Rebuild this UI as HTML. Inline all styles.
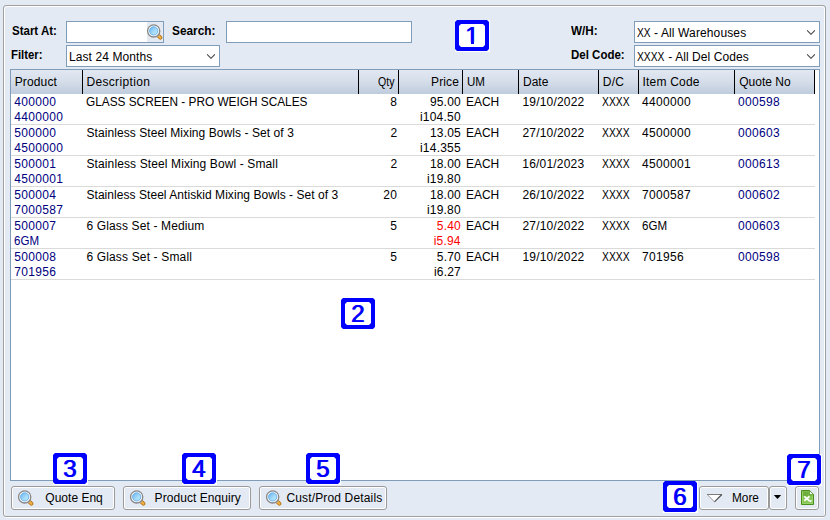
<!DOCTYPE html>
<html lang="en">
<head>
<meta charset="utf-8">
<title>Product Quote History</title>
<style>
html,body{margin:0;padding:0;}
body{width:830px;height:520px;background:#e4eaf3;position:relative;overflow:hidden;
  font-family:"Liberation Sans",sans-serif;font-size:12px;color:#000;line-height:15px;}
#panelw{position:absolute;left:4px;top:6px;width:819px;height:510px;border:1px solid #fff;border-radius:3px;}
#panel{position:absolute;left:3px;top:5px;width:821px;height:510px;border:1px solid #a0a0a0;border-radius:3px;}
.t{position:absolute;white-space:nowrap;height:15px;line-height:15px;}
.b{font-weight:bold;}
.nv{color:#000080;}
.rd{color:#ff0000;}
.inp{position:absolute;box-sizing:border-box;background:#fff;border:1px solid #7f9db9;height:22px;}
.inp .ico{position:absolute;left:80px;top:0;width:16px;height:20px;background:#e4e9f2;}
.sel{position:absolute;box-sizing:border-box;background:#fff;border:1px solid #7f9db9;height:22px;}
.sel svg{position:absolute;right:4px;top:8px;}
#grid{position:absolute;left:10px;top:69px;width:810px;height:412px;box-sizing:border-box;border:1px solid #7f9db9;background:#fff;}
#hdr{position:absolute;left:0;top:0;width:803px;height:24px;background:linear-gradient(#e2e8f2 0%,#d4dde9 50%,#bfccdd 100%);}
#hdr i{position:absolute;top:0;width:1px;height:24px;background:#000;}
.row{position:absolute;left:0;width:804px;height:30px;border-bottom:1px solid #dadada;}
.btn{position:absolute;box-sizing:border-box;top:486px;height:24px;border:1px solid #9a9a9a;border-radius:3px;background:#e4eaf3;
  box-shadow:inset 0 0 0 1px #fff;}
.btn svg{position:absolute;}
.mag{position:absolute;}
.badge{position:absolute;width:35px;height:32px;background:#fff;}
.badge b{position:absolute;left:0;top:0;width:34px;height:31px;background:#0000ff;
  clip-path:polygon(2px 0,32px 0,34px 2px,34px 29px,32px 31px,2px 31px,0 29px,0 2px);}
.badge u{position:absolute;left:4px;top:4px;width:26px;height:23px;background:#fff;
  clip-path:polygon(2px 0,24px 0,26px 2px,26px 21px,24px 23px,2px 23px,0 21px,0 2px);}
.badge span{position:absolute;left:3.5px;top:4px;width:26px;height:23px;line-height:23px;text-align:center;
  color:#0000ff;font-weight:normal;font-size:24px;text-shadow:1px 0 0 #0000ff;}
.badge s{position:absolute;background:#fff;top:21.7px;height:2.8px;}
.badge .f1{left:10.5px;width:5.3px;}
.badge .f2{left:19.1px;width:5.4px;}
</style>
</head>
<body>
<svg width="0" height="0" style="position:absolute"><defs><linearGradient id="lens" x1="0.1" y1="0.1" x2="0.9" y2="0.9"><stop offset="0" stop-color="#6fbaf0"/><stop offset="0.55" stop-color="#a5daf8"/><stop offset="1" stop-color="#b9e6fb"/></linearGradient></defs></svg>
<div id="panelw"></div><div id="panel"></div>

<!-- filter bar -->
<label class="t b" style="top:24px;left:12.47px;transform:scaleX(0.9578);transform-origin:0 0;">Start At:</label>
<div class="inp" style="left:66px;top:21px;width:98px;"><div class="ico"></div><svg class="mag" style="left:80px;top:2px;" width="16" height="16" viewBox="0 0 16 16"><path d="M11.2 11.5 L13.4 13.7" stroke="#b67619" stroke-width="3.9" stroke-linecap="round"/><path d="M12 12.3 L13.4 13.7" stroke="#f6b244" stroke-width="2.1" stroke-linecap="round"/><path d="M10 10.3 L11.6 11.9" stroke="#c4c8ce" stroke-width="3.2"/><circle cx="6.7" cy="6.9" r="6.1" fill="#fff" stroke="#878787" stroke-width="1.3"/><circle cx="6.7" cy="6.9" r="4.15" fill="url(#lens)" stroke="#4fa5ec" stroke-width="0.8"/></svg></div>
<label class="t b" style="top:24px;left:172.46px;transform:scaleX(0.9877);transform-origin:0 0;">Search:</label>
<div class="inp" style="left:226px;top:21px;width:186px;"></div>
<label class="t b" style="top:48px;left:11.04px;transform:scaleX(0.9466);transform-origin:0 0;">Filter:</label>
<div class="sel" style="left:66px;top:45px;width:154px;">
  <span class="t" style="top:4px;left:1.92px;letter-spacing:0.098px;">Last 24 Months</span>
  <svg width="8" height="5" viewBox="0 0 8 5"><path d="M0 0.3 L4 4.3 L8 0.3" fill="none" stroke="#444" stroke-width="1.1"/></svg>
</div>
<label class="t b" style="top:24px;left:571.19px;transform:scaleX(0.9749);transform-origin:0 0;">W/H:</label>
<div class="sel" style="left:634px;top:21px;width:186px;">
  <span class="t" style="top:4px;left:2.37px;transform:scaleX(0.8459);transform-origin:0 0;">XX </span>
  <span class="t" style="top:4px;left:18.97px;letter-spacing:0.127px;">- All Warehouses</span>
  <svg width="8" height="5" viewBox="0 0 8 5"><path d="M0 0.3 L4 4.3 L8 0.3" fill="none" stroke="#444" stroke-width="1.1"/></svg>
</div>
<label class="t b" style="top:48px;left:571.03px;transform:scaleX(0.9584);transform-origin:0 0;">Del Code:</label>
<div class="sel" style="left:634px;top:45px;width:186px;">
  <span class="t" style="top:4px;left:2.37px;transform:scaleX(0.8573);transform-origin:0 0;">XXXX </span>
  <span class="t" style="top:4px;left:33.37px;letter-spacing:0.067px;">- All Del Codes</span>
  <svg width="8" height="5" viewBox="0 0 8 5"><path d="M0 0.3 L4 4.3 L8 0.3" fill="none" stroke="#444" stroke-width="1.1"/></svg>
</div>

<!-- grid -->
<div id="grid">
  <div id="hdr">
    <span class="t" style="top:5px;left:3.72px;letter-spacing:0.136px;">Product</span><i style="left:71px;"></i>
    <span class="t" style="top:5px;left:75.42px;letter-spacing:0.344px;">Description</span><i style="left:347px;"></i>
    <span class="t" style="top:5px;left:367.2px;transform:scaleX(0.8796);transform-origin:0 0;">Qty</span><i style="left:387px;"></i>
    <span class="t" style="top:5px;left:420.02px;letter-spacing:0.119px;">Price</span><i style="left:451px;"></i>
    <span class="t" style="top:5px;left:456.21px;transform:scaleX(0.9611);transform-origin:0 0;">UM</span><i style="left:507px;"></i>
    <span class="t" style="top:5px;left:511.92px;letter-spacing:0.057px;">Date</span><i style="left:587px;"></i>
    <span class="t" style="top:5px;left:591.82px;letter-spacing:0.188px;">D/C</span><i style="left:627px;"></i>
    <span class="t" style="top:5px;left:631.59px;letter-spacing:0.185px;">Item Code</span><i style="left:723px;"></i>
    <span class="t" style="top:5px;left:728.13px;letter-spacing:0.030px;">Quote No</span><i style="left:803px;"></i>
  </div>
  <div class="row" style="top:24px;">
    <span class="t nv" style="top:1px;left:3.3px;letter-spacing:0.326px;">400000</span>
    <span class="t nv" style="top:16px;left:3.3px;letter-spacing:0.326px;">4400000</span>
    <span class="t" style="top:1px;left:75.41px;transform:scaleX(0.9854);transform-origin:0 0;">GLASS SCREEN - PRO WEIGH SCALES</span>
    <span class="t" style="top:1px;right:417.65px;letter-spacing:0.326px;">8</span>
    <span class="t" style="top:1px;right:354.14px;letter-spacing:0.194px;">95.00</span>
    <span class="t" style="top:16px;right:354.1px;letter-spacing:0.233px;">i104.50</span>
    <span class="t" style="top:1px;left:455.12px;transform:scaleX(0.9975);transform-origin:0 0;">EACH</span>
    <span class="t" style="top:1px;left:511.4px;letter-spacing:0.194px;">19/10/2022</span>
    <span class="t" style="top:1px;left:590.97px;transform:scaleX(0.8605);transform-origin:0 0;">XXXX</span>
    <span class="t" style="top:1px;left:631px;letter-spacing:0.326px;">4400000</span>
    <span class="t nv" style="top:1px;left:727px;letter-spacing:0.326px;">000598</span>
  </div>
  <div class="row" style="top:55px;">
    <span class="t nv" style="top:1px;left:3.3px;letter-spacing:0.326px;">500000</span>
    <span class="t nv" style="top:16px;left:3.3px;letter-spacing:0.326px;">4500000</span>
    <span class="t" style="top:1px;left:75.46px;letter-spacing:0.069px;">Stainless Steel Mixing Bowls - Set of 3</span>
    <span class="t" style="top:1px;right:417.57px;letter-spacing:0.326px;">2</span>
    <span class="t" style="top:1px;right:354.1px;letter-spacing:0.194px;">13.05</span>
    <span class="t" style="top:16px;right:354.06px;letter-spacing:0.233px;">i14.355</span>
    <span class="t" style="top:1px;left:455.12px;transform:scaleX(0.9975);transform-origin:0 0;">EACH</span>
    <span class="t" style="top:1px;left:511.4px;letter-spacing:0.194px;">27/10/2022</span>
    <span class="t" style="top:1px;left:590.97px;transform:scaleX(0.8605);transform-origin:0 0;">XXXX</span>
    <span class="t" style="top:1px;left:631px;letter-spacing:0.326px;">4500000</span>
    <span class="t nv" style="top:1px;left:727px;letter-spacing:0.326px;">000603</span>
  </div>
  <div class="row" style="top:86px;">
    <span class="t nv" style="top:1px;left:3.3px;letter-spacing:0.326px;">500001</span>
    <span class="t nv" style="top:16px;left:3.3px;letter-spacing:0.326px;">4500001</span>
    <span class="t" style="top:1px;left:75.46px;letter-spacing:0.116px;">Stainless Steel Mixing Bowl - Small</span>
    <span class="t" style="top:1px;right:417.57px;letter-spacing:0.326px;">2</span>
    <span class="t" style="top:1px;right:354.14px;letter-spacing:0.194px;">18.00</span>
    <span class="t" style="top:16px;right:354.11px;letter-spacing:0.217px;">i19.80</span>
    <span class="t" style="top:1px;left:455.12px;transform:scaleX(0.9975);transform-origin:0 0;">EACH</span>
    <span class="t" style="top:1px;left:511.32px;letter-spacing:0.194px;">16/01/2023</span>
    <span class="t" style="top:1px;left:590.97px;transform:scaleX(0.8605);transform-origin:0 0;">XXXX</span>
    <span class="t" style="top:1px;left:631px;letter-spacing:0.326px;">4500001</span>
    <span class="t nv" style="top:1px;left:727px;letter-spacing:0.326px;">000613</span>
  </div>
  <div class="row" style="top:117px;">
    <span class="t nv" style="top:1px;left:3.3px;letter-spacing:0.326px;">500004</span>
    <span class="t nv" style="top:16px;left:3.3px;letter-spacing:0.326px;">7000587</span>
    <span class="t" style="top:1px;left:75.46px;letter-spacing:0.050px;">Stainless Steel Antiskid Mixing Bowls - Set of 3</span>
    <span class="t" style="top:1px;right:417.71px;letter-spacing:0.326px;">20</span>
    <span class="t" style="top:1px;right:354.14px;letter-spacing:0.194px;">18.00</span>
    <span class="t" style="top:16px;right:354.11px;letter-spacing:0.217px;">i19.80</span>
    <span class="t" style="top:1px;left:455.12px;transform:scaleX(0.9975);transform-origin:0 0;">EACH</span>
    <span class="t" style="top:1px;left:511.4px;letter-spacing:0.194px;">26/10/2022</span>
    <span class="t" style="top:1px;left:590.97px;transform:scaleX(0.8605);transform-origin:0 0;">XXXX</span>
    <span class="t" style="top:1px;left:631px;letter-spacing:0.326px;">7000587</span>
    <span class="t nv" style="top:1px;left:727px;letter-spacing:0.326px;">000602</span>
  </div>
  <div class="row" style="top:148px;">
    <span class="t nv" style="top:1px;left:3.3px;letter-spacing:0.326px;">500007</span>
    <span class="t nv" style="top:16px;left:3.3px;transform:scaleX(0.9614);transform-origin:0 0;">6GM</span>
    <span class="t" style="top:1px;left:75.39px;letter-spacing:0.138px;">6 Glass Set - Medium</span>
    <span class="t" style="top:1px;right:417.67px;letter-spacing:0.326px;">5</span>
    <span class="t rd" style="top:1px;right:354.17px;letter-spacing:0.161px;">5.40</span>
    <span class="t rd" style="top:16px;right:354.25px;letter-spacing:0.196px;">i5.94</span>
    <span class="t" style="top:1px;left:455.12px;transform:scaleX(0.9975);transform-origin:0 0;">EACH</span>
    <span class="t" style="top:1px;left:511.4px;letter-spacing:0.194px;">27/10/2022</span>
    <span class="t" style="top:1px;left:590.97px;transform:scaleX(0.8605);transform-origin:0 0;">XXXX</span>
    <span class="t" style="top:1px;left:631px;transform:scaleX(0.9614);transform-origin:0 0;">6GM</span>
    <span class="t nv" style="top:1px;left:727px;letter-spacing:0.326px;">000603</span>
  </div>
  <div class="row" style="top:179px;">
    <span class="t nv" style="top:1px;left:3.3px;letter-spacing:0.326px;">500008</span>
    <span class="t nv" style="top:16px;left:3.3px;letter-spacing:0.326px;">701956</span>
    <span class="t" style="top:1px;left:75.39px;letter-spacing:0.156px;">6 Glass Set - Small</span>
    <span class="t" style="top:1px;right:417.67px;letter-spacing:0.326px;">5</span>
    <span class="t" style="top:1px;right:354.17px;letter-spacing:0.161px;">5.70</span>
    <span class="t" style="top:16px;right:354px;letter-spacing:0.196px;">i6.27</span>
    <span class="t" style="top:1px;left:455.12px;transform:scaleX(0.9975);transform-origin:0 0;">EACH</span>
    <span class="t" style="top:1px;left:511.4px;letter-spacing:0.194px;">19/10/2022</span>
    <span class="t" style="top:1px;left:590.97px;transform:scaleX(0.8605);transform-origin:0 0;">XXXX</span>
    <span class="t" style="top:1px;left:631px;letter-spacing:0.326px;">701956</span>
    <span class="t nv" style="top:1px;left:727px;letter-spacing:0.326px;">000598</span>
  </div>
</div>

<!-- buttons -->
<div class="btn" style="left:11px;width:104px;"><svg class="mag" style="left:6px;top:3px;" width="16" height="16" viewBox="0 0 16 16"><path d="M11.2 11.5 L13.4 13.7" stroke="#b67619" stroke-width="3.9" stroke-linecap="round"/><path d="M12 12.3 L13.4 13.7" stroke="#f6b244" stroke-width="2.1" stroke-linecap="round"/><path d="M10 10.3 L11.6 11.9" stroke="#c4c8ce" stroke-width="3.2"/><circle cx="6.7" cy="6.9" r="6.1" fill="#fff" stroke="#878787" stroke-width="1.3"/><circle cx="6.7" cy="6.9" r="4.15" fill="url(#lens)" stroke="#4fa5ec" stroke-width="0.8"/></svg><span class="t" style="top:4px;left:33.33px;letter-spacing:0.008px;">Quote Enq</span></div>
<div class="btn" style="left:123px;width:128px;"><svg class="mag" style="left:6px;top:3px;" width="16" height="16" viewBox="0 0 16 16"><path d="M11.2 11.5 L13.4 13.7" stroke="#b67619" stroke-width="3.9" stroke-linecap="round"/><path d="M12 12.3 L13.4 13.7" stroke="#f6b244" stroke-width="2.1" stroke-linecap="round"/><path d="M10 10.3 L11.6 11.9" stroke="#c4c8ce" stroke-width="3.2"/><circle cx="6.7" cy="6.9" r="6.1" fill="#fff" stroke="#878787" stroke-width="1.3"/><circle cx="6.7" cy="6.9" r="4.15" fill="url(#lens)" stroke="#4fa5ec" stroke-width="0.8"/></svg><span class="t" style="top:4px;left:30.62px;letter-spacing:0.059px;">Product Enquiry</span></div>
<div class="btn" style="left:259px;width:128px;"><svg class="mag" style="left:6px;top:3px;" width="16" height="16" viewBox="0 0 16 16"><path d="M11.2 11.5 L13.4 13.7" stroke="#b67619" stroke-width="3.9" stroke-linecap="round"/><path d="M12 12.3 L13.4 13.7" stroke="#f6b244" stroke-width="2.1" stroke-linecap="round"/><path d="M10 10.3 L11.6 11.9" stroke="#c4c8ce" stroke-width="3.2"/><circle cx="6.7" cy="6.9" r="6.1" fill="#fff" stroke="#878787" stroke-width="1.3"/><circle cx="6.7" cy="6.9" r="4.15" fill="url(#lens)" stroke="#4fa5ec" stroke-width="0.8"/></svg><span class="t" style="top:4px;left:26.39px;letter-spacing:0.155px;">Cust/Prod Details</span></div>
<div class="btn" style="left:699px;width:70px;"><svg width="18" height="10" viewBox="0 0 18 10" style="left:6px;top:6px;"><path d="M1.5 1.5 L15.5 1.5 L8.5 8.5 Z" fill="#fff"/><path d="M1.2 1.5 L8.5 8.8" fill="none" stroke="#9c9c9c" stroke-width="1"/><path d="M1 1.5 L16 1.5" fill="none" stroke="#7c7c7c" stroke-width="1"/><path d="M15.8 1.5 L8.5 8.8" fill="none" stroke="#4a4a4a" stroke-width="1.1"/></svg><span class="t" style="top:4px;left:31.63px;transform:scaleX(0.9836);transform-origin:0 0;">More</span></div>
<div class="btn" style="left:769px;width:18px;"><svg width="9" height="6" viewBox="0 0 9 6" style="left:3px;top:7px;"><path d="M0.8 1 L8.2 1 L4.5 5 Z" fill="#000"/></svg></div>
<div class="btn" style="left:795px;width:24px;"><svg width="14" height="16" viewBox="0 0 14 16" style="left:5px;top:3px;"><path d="M0.5 0.5 H8.6 L12.5 4.4 V14.5 H0.5 Z" fill="#86c655" stroke="#4a8d1b" stroke-width="1"/><path d="M1.6 1.6 H7.2 V6 H1.6 Z" fill="#6dac3d"/><path d="M1.5 1.5 V13.5 H11.5 V5" fill="none" stroke="#9ad46c" stroke-width="0.9"/><path d="M8.6 1 L12 4.4 H8.6 Z" fill="#fff"/><path d="M8.3 0.8 V4.8 H12.3" fill="none" stroke="#3f8415" stroke-width="0.7"/><path d="M3.3 6.3 L8.4 10.9 M8.5 6.3 L3.3 10.9" fill="none" stroke="#fff" stroke-width="1.8"/><path d="M7.8 10.8 H10 L9.2 12" fill="none" stroke="#fff" stroke-width="1.3"/></svg></div>

<!-- numbered callouts -->
<div class="badge" style="left:455px;top:20px;"><b></b><u></u><span>1</span><s class="f1"></s><s class="f2"></s></div>
<div class="badge" style="left:341px;top:298px;"><b></b><u></u><span>2</span></div>
<div class="badge" style="left:53px;top:453px;"><b></b><u></u><span>3</span></div>
<div class="badge" style="left:182px;top:453px;"><b></b><u></u><span>4</span></div>
<div class="badge" style="left:306px;top:453px;"><b></b><u></u><span>5</span></div>
<div class="badge" style="left:663px;top:481px;"><b></b><u></u><span>6</span></div>
<div class="badge" style="left:787px;top:454px;"><b></b><u></u><span>7</span></div>
</body>
</html>
